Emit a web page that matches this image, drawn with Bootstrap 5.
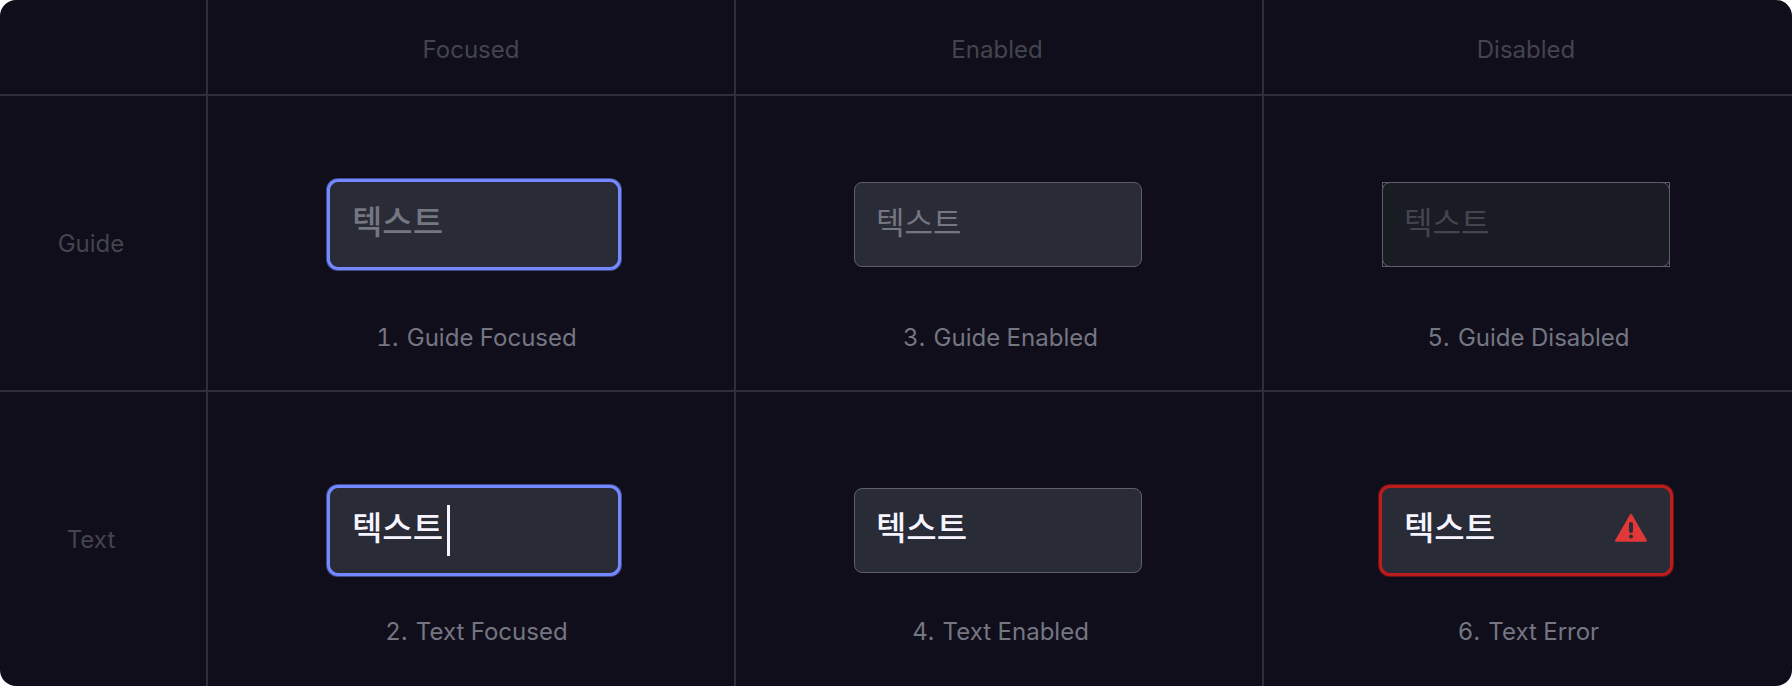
<!DOCTYPE html>
<html lang="ko">
<head>
<meta charset="utf-8">
<meta name="viewport" content="width=device-width, initial-scale=1">
<title>Text Field States</title>
<link href="https://cdn.jsdelivr.net/npm/bootstrap@5.3.0/dist/css/bootstrap.min.css" rel="stylesheet">
<style>
  :root {
    --page: #100e1b;
    --line: #2e2f38;
    --field: #292b37;
    --field-line: #5f5d6b;
    --heading: #43444e;
    --caption: #747681;
    --ink: #f5f4ff;
    --focus: #7488ff;
    --error: #bc1c1c;
  }
  body {
    background: #fff;
    font-family: Inter, "Noto Sans CJK KR", sans-serif;
    font-size: 24px;
    line-height: 28px;
  }
  .board {
    min-height: 100vh;
    background: var(--page);
    border-radius: 16px;
  }
  .state-grid {
    height: 100vh;
    table-layout: fixed;
    border-collapse: separate;
    border-spacing: 0;
  }
  .state-grid th, .state-grid td { padding: 0; border: 0 solid var(--line); }
  .state-grid th { color: var(--heading); font-weight: 400; text-align: center; }
  .state-grid tr > :not(:last-child) { border-right-width: 2px; }
  .state-grid tr:not(.last-row) > * { border-bottom-width: 2px; }
  .state-grid tr > :nth-child(n+3) { padding-right: 4px; }
  .state-grid td:nth-child(3) { padding-right: 2px; }
  .head-row { height: 96px; }
  .state-grid .head-row th { padding-top: 6px; }
  .guide-row { height: 296px; }
  .side-col { width: 208px; }
  .state-grid .side-head { padding: 2px 24px 0 0; }
  .state-grid td { vertical-align: top; }
  .state-grid td:nth-child(2) { padding-left: 6px; }
  .guide-row td { padding-top: 86px; }
  .last-row td { padding-top: 96px; }

  .state { width: 288px; }
  .state label {
    padding-left: 5px;
    color: var(--caption);
    font-variant-numeric: tabular-nums;
    white-space: nowrap;
  }
  .state label span { margin-right: 2px; }
  .guide-row label { margin-top: 57px; }
  .last-row label { margin-top: 45px; }

  .field {
    height: 85px;
    padding: 0 21px 10px;
    color: var(--ink);
    background: var(--field);
    border: 1px solid var(--field-line);
    border-radius: 8px;
    font-family: "Noto Sans CJK KR", sans-serif;
    font-size: 33px;
    font-weight: 500;
    line-height: 48px;
  }
  .field:focus { color: var(--ink); background: var(--field); box-shadow: none; }
  .field::placeholder { color: var(--caption); opacity: 1; }
  .field-light { font-size: 31px; font-weight: 400; padding-bottom: 8px; }
  .field-focused, .field-focused:focus {
    border-color: var(--field);
    box-shadow: 0 0 0 3px var(--focus), 0 0 0 4px #7488ff80;
  }
  .field-error, .field-error:focus {
    border-color: var(--field);
    box-shadow: 0 0 0 3px var(--error), 0 0 0 4px #bc1c1c80;
  }
  .field-off { border: 1px solid var(--field-line); }
  .field-off .field { width: calc(100% + 2px); margin: -1px; }
  .field:disabled { background: #1a1c24; }
  .field:disabled::placeholder { color: #43454e; }

  .caret { left: 117px; top: 17px; width: 3px; height: 51px; background: var(--ink); }
  .alert-mark { right: 23px; top: 25px; }
</style>
</head>
<body>
<main class="board overflow-hidden">
  <table class="state-grid w-100">
    <colgroup><col class="side-col"><col><col><col></colgroup>
    <thead>
      <tr class="head-row">
        <td></td>
        <th scope="col">Focused</th>
        <th scope="col">Enabled</th>
        <th scope="col">Disabled</th>
      </tr>
    </thead>
    <tbody>
      <tr class="guide-row">
        <th scope="row" class="side-head">Guide</th>
        <td>
          <div class="state mx-auto d-flex flex-column align-items-center">
            <input id="f1" class="form-control field field-focused" type="text" placeholder="텍스트">
            <label for="f1"><span>1.</span> Guide Focused</label>
          </div>
        </td>
        <td>
          <div class="state mx-auto d-flex flex-column align-items-center">
            <input id="f3" class="form-control field field-light" type="text" placeholder="텍스트">
            <label for="f3"><span>3.</span> Guide Enabled</label>
          </div>
        </td>
        <td>
          <div class="state mx-auto d-flex flex-column align-items-center">
            <div class="field-off w-100">
              <input id="f5" class="form-control field field-light" type="text" placeholder="텍스트" disabled>
            </div>
            <label for="f5"><span>5.</span> Guide Disabled</label>
          </div>
        </td>
      </tr>
      <tr class="last-row">
        <th scope="row" class="side-head">Text</th>
        <td>
          <div class="state mx-auto d-flex flex-column align-items-center">
            <div class="position-relative w-100">
              <input id="f2" class="form-control field field-focused" type="text" value="텍스트">
              <span class="caret position-absolute"></span>
            </div>
            <label for="f2"><span>2.</span> Text Focused</label>
          </div>
        </td>
        <td>
          <div class="state mx-auto d-flex flex-column align-items-center">
            <input id="f4" class="form-control field" type="text" value="텍스트">
            <label for="f4"><span>4.</span> Text Enabled</label>
          </div>
        </td>
        <td>
          <div class="state mx-auto d-flex flex-column align-items-center">
            <div class="position-relative w-100">
              <input id="f6" class="form-control field field-error" type="text" value="텍스트" aria-invalid="true">
              <svg class="alert-mark position-absolute" width="32" height="30" viewBox="0 0 32 30" aria-hidden="true">
                <path d="M16 1.800 31 27.700H1Z" fill="#e03838" stroke="#e03838" stroke-width="2" stroke-linejoin="round"/>
                <path d="M16 11v7" stroke="#292b37" stroke-width="4" stroke-linecap="round"/>
                <circle cx="16" cy="23.500" r="2" fill="#292b37"/>
              </svg>
            </div>
            <label for="f6"><span>6.</span> Text Error</label>
          </div>
        </td>
      </tr>
    </tbody>
  </table>
</main>
<script src="https://cdn.jsdelivr.net/npm/bootstrap@5.3.0/dist/js/bootstrap.bundle.min.js"></script>
</body>
</html>
